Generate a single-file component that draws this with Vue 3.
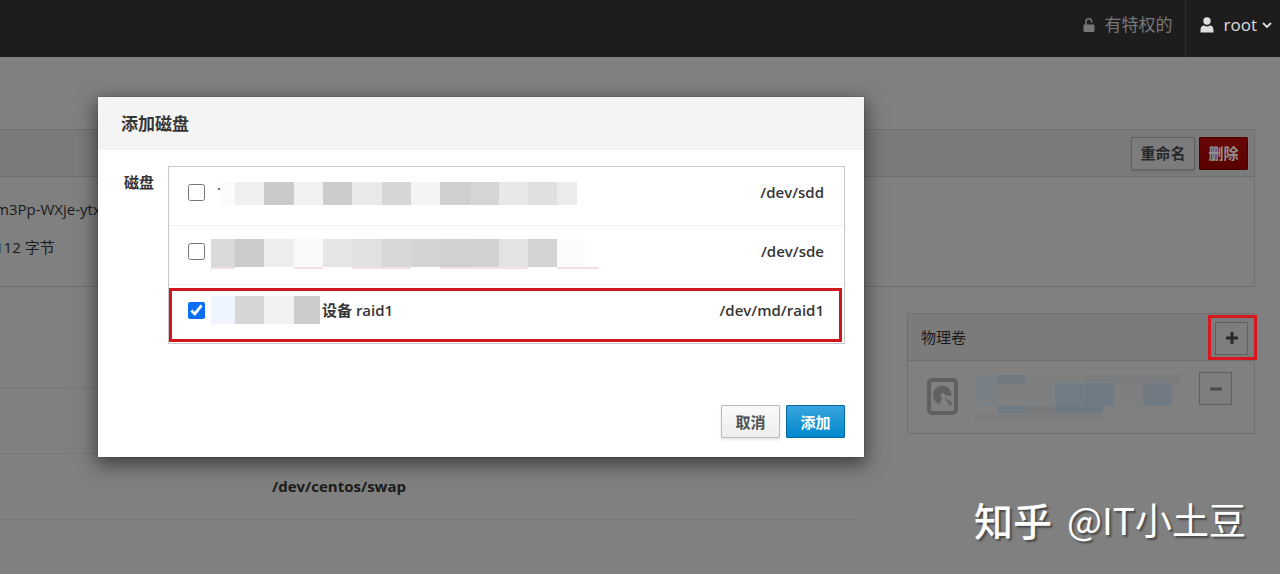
<script setup>
import { ref } from 'vue'

const disks = ref([
  {
    id: 'sdd', path: '/dev/sdd', name: '', checked: false, width: 366, top: 8, height: 23,
    cells: [[9, 15, '#fbfbfb'], [24, 29, '#efefef'], [53, 30, '#cacaca'], [83, 29, '#f1f1f1'], [112, 29, '#cccccc'], [141, 30, '#eaeaea'], [171, 29, '#d6d6d6'], [200, 29, '#f4f4f4'], [229, 30, '#cfcfcf'], [259, 29, '#d5d5d5'], [288, 29, '#e8e8e8'], [317, 29, '#e0e0e0'], [346, 20, '#ebebeb']],
    strips: [], dot: true
  },
  {
    id: 'sde', path: '/dev/sde', name: '', checked: false, width: 388, top: 6, height: 28,
    cells: [[0, 24, '#d9d9d9'], [24, 29, '#cbcbcb'], [53, 30, '#eeeeee'], [83, 29, '#f9f9f9'], [112, 29, '#e6e6e6'], [141, 30, '#e1e1e1'], [171, 29, '#d8d8d8'], [200, 29, '#d4d4d4'], [229, 30, '#d1d1d1'], [259, 29, '#d2d2d2'], [288, 29, '#e3e3e3'], [317, 29, '#d3d3d3'], [346, 28, '#fbfbfb']],
    strips: [[0, 24], [83, 29], [141, 59], [229, 88], [346, 42]], dot: false
  },
  {
    id: 'raid1', path: '/dev/md/raid1', name: '设备 raid1', checked: true, width: 109, top: 4, height: 28,
    cells: [[0, 24, '#eff4ff'], [24, 29, '#d6d6d6'], [53, 30, '#f2f2f2'], [83, 26, '#cccccc']],
    strips: [], dot: false
  }
])

const volumeCells = [
  [0, 0, 22, 31, '#798086'], [22, 0, 28, 9, '#727b82'], [22, 9, 58, 22, '#7d7f80'],
  [50, 0, 60, 9, '#7e7f7f'], [110, 0, 96, 9, '#7b7c7d'], [80, 8, 30, 23, '#717d86'], [110, 8, 29, 23, '#6e7b85'],
  [139, 9, 29, 22, '#7e7f80'], [168, 8, 29, 23, '#727b83'], [22, 31, 28, 7, '#6e7a84'],
  [50, 31, 30, 7, '#777b7e'], [80, 31, 48, 7, '#6d7983'], [0, 38, 128, 7, '#7d7d7d']
]
</script>

<template>
  <div class="screen">
    <header class="topbar">
      <span class="privilege">
        <svg width="12" height="16" viewBox="0 0 12 16" aria-hidden="true">
          <path d="M3 8V4.500a2.800 2.800 0 0 1 5.600 0V5.500" fill="none" stroke="currentColor" stroke-width="1.600" />
          <rect x="0.500" y="7.500" width="11" height="7.500" rx="1" fill="currentColor" />
        </svg>
        有特权的
      </span>
      <button class="user" type="button">
        <svg width="14" height="16" viewBox="0 0 14 16" aria-hidden="true">
          <circle cx="7" cy="4" r="3.700" fill="currentColor" />
          <path d="M.5 15.500v-2.500C.5 9.800 2.300 8.500 4 8.500c1.700 1.200 4.300 1.200 6 0 1.700 0 3.500 1.300 3.500 4.500v2.500z" fill="currentColor" />
        </svg>
        <span class="user-name">root</span>
        <svg width="10" height="8" viewBox="0 0 10 8" aria-hidden="true">
          <path d="M1 2l4 4 4-4" fill="none" stroke="currentColor" stroke-width="1.800" />
        </svg>
      </button>
    </header>

    <main class="content">
      <section class="panel">
        <div class="panel-head">
          <div class="actions">
            <button class="btn dim" type="button">重命名</button>
            <button class="btn danger" type="button">删除</button>
          </div>
        </div>
        <div class="facts">
          <div>m3Pp-WXje-ytx</div>
          <div>112 字节</div>
        </div>
      </section>

      <div class="columns">
        <section class="volumes">
          <div class="volume first"></div>
          <div class="volume"></div>
          <div class="volume">/dev/centos/swap</div>
        </section>

        <section class="panel physical">
          <div class="panel-head">
            <h2>物理卷</h2>
            <span class="marked">
              <button class="square" type="button" aria-label="添加">
                <svg width="12" height="12" viewBox="0 0 12 12"><path d="M6 0v12M0 6h12" stroke="currentColor" stroke-width="3" /></svg>
              </button>
            </span>
          </div>
          <div class="physical-row">
            <svg class="drive" width="31" height="37" viewBox="0 0 31 37" aria-hidden="true">
              <rect x="2" y="2" width="27" height="33" rx="3" fill="none" stroke="currentColor" stroke-width="4" />
              <path d="M13 26A9.300 9.300 0 1 1 24.500 18L18 17A2.300 2.300 0 1 0 15 19.500z" fill="currentColor" />
              <path d="M17 18.500l8 6.500-1.500 3.500z" fill="currentColor" />
            </svg>
            <svg class="redacted" width="206" height="46" viewBox="0 0 206 46" aria-hidden="true">
              <rect v-for="(c, i) in volumeCells" :key="i" :x="c[0]" :y="c[1]" :width="c[2]" :height="c[3]" :fill="c[4]" />
            </svg>
            <button class="square minus" type="button" aria-label="移除">
              <svg width="12" height="12" viewBox="0 0 12 12"><path d="M0 6h12" stroke="currentColor" stroke-width="3" /></svg>
            </button>
          </div>
        </section>
      </div>
    </main>

    <div class="modal-layer">
      <form class="dialog" role="dialog" aria-labelledby="dialog-title" @submit.prevent>
        <h1 id="dialog-title">添加磁盘</h1>
        <div class="dialog-body">
          <span id="disk-label" class="field-label">磁盘</span>
          <ul class="disks" aria-labelledby="disk-label">
            <li v-for="d in disks" :key="d.id" :class="{ chosen: d.id === 'raid1' }">
              <label>
                <input v-model="d.checked" type="checkbox" />
                <svg class="mask" :width="d.width" height="36" aria-hidden="true">
                  <circle v-if="d.dot" cx="8" cy="15" r="1" fill="#444" />
                  <rect v-for="(c, i) in d.cells" :key="i" :x="c[0]" :y="d.top" :width="c[1]" :height="d.height" :fill="c[2]" />
                  <rect v-for="(s, i) in d.strips" :key="'s' + i" :x="s[0]" y="34" :width="s[1]" height="2" fill="#f4e0e2" />
                </svg>
                <span class="disk-name">{{ d.name }}</span>
                <span>{{ d.path }}</span>
              </label>
            </li>
          </ul>
        </div>
        <footer>
          <button class="btn light" type="button">取消</button>
          <button class="btn primary" type="submit">添加</button>
        </footer>
      </form>
    </div>

    <div class="watermark"><span class="brand">知乎</span><span>@IT小土豆</span></div>
  </div>
</template>

<style>
body {
  margin: 0;
  background: #808080;
}
</style>

<style scoped>
.screen {
  position: relative;
  min-height: 100vh;
  box-sizing: border-box;
  overflow: hidden;
  background: #808080;
  color: #1b1b1b;
  font: 15px/22px "Open Sans", "Noto Sans CJK SC", sans-serif;
}
button {
  font: inherit;
  margin: 0;
}
svg {
  display: block;
  flex: none;
}
.topbar {
  height: 57px;
  display: flex;
  justify-content: flex-end;
  background: #1d1d1d;
}
.privilege {
  display: flex;
  align-items: center;
  gap: 10px;
  padding: 0 12px 8px 0;
  color: #777;
  font-size: 17px;
}
.user {
  display: flex;
  align-items: center;
  padding: 0 8px 8px 14px;
  border: 0;
  border-left: 1px solid #303030;
  background: none;
  color: #dedede;
}
.user-name {
  font-size: 17px;
  margin: 0 5px 0 10px;
}
.content {
  padding: 72px 25px 0 0;
  margin-left: -5px;
}
.panel {
  border: 1px solid #6f6f6f;
  border-left: 0;
}
.panel-head {
  display: flex;
  align-items: center;
  justify-content: space-between;
  height: 46px;
  border-bottom: 1px solid #6f6f6f;
  background: #7b7b7b;
}
.actions {
  display: flex;
  gap: 4px;
  margin-left: auto;
  padding-right: 6px;
}
.btn {
  height: 33px;
  box-sizing: border-box;
  padding: 0 8px;
  border: 1px solid #606060;
  border-radius: 1px;
  font-weight: 600;
  line-height: 20px;
}
.btn.dim {
  width: 64px;
  background: #7c7c7c;
  color: #262829;
  box-shadow: 0 2px 3px rgba(0, 0, 0, 0.1);
}
.btn.danger {
  width: 49px;
  border-color: #480000;
  background: linear-gradient(#690606, #590000);
  color: #929292;
}
.facts {
  display: flex;
  flex-direction: column;
  gap: 16px;
  padding: 21px 0 28px;
}
.columns {
  display: flex;
  gap: 50px;
  align-items: flex-start;
  padding-top: 26px;
}
.volumes {
  flex: 1;
}
.volume {
  height: 65px;
  border-bottom: 1px solid #787878;
  padding-left: 277px;
  line-height: 65px;
  font-weight: 700;
}
.volume.first {
  height: 74px;
}
.physical {
  width: 346px;
  border-left: 1px solid #6f6f6f;
}
h2 {
  margin: 0 0 0 13px;
  font-size: 15px;
  font-weight: 400;
}
.marked {
  padding: 4px 6px 2px 4px;
  border: 3px solid #d7191f;
  margin-right: -3px;
}
.square {
  width: 33px;
  height: 33px;
  display: grid;
  place-items: center;
  box-sizing: border-box;
  border: 1px solid #5f5f5f;
  background: #7e7e7e;
  color: #282828;
  padding: 0;
}
.physical-row {
  display: flex;
  align-items: flex-start;
  padding: 11px 22px 0 19px;
  height: 61px;
}
.drive {
  margin-top: 6px;
  color: #606060;
}
.redacted {
  margin: 3px auto 0 17px;
}
.square.minus {
  color: #4b4b4b;
}
.modal-layer {
  position: absolute;
  inset: 97px 98px auto;
}
.dialog {
  max-width: 766px;
  background: #fff;
  color: #363636;
  box-shadow: 0 0 1px 0 rgba(0, 0, 0, 0.4), 0 6px 18px 2px rgba(0, 0, 0, 0.5);
}
h1 {
  margin: 0;
  padding: 15px 23px 14px;
  background: #f4f4f4;
  font-size: 17px;
  line-height: 24px;
  font-weight: 600;
}
.dialog-body {
  display: flex;
  padding: 16px 19px 0 26px;
}
.field-label {
  width: 44px;
  padding-top: 5px;
  font-weight: 600;
}
.disks {
  flex: 1;
  margin: 0;
  padding: 0;
  list-style: none;
  border: 1px solid #c8c8c8;
}
.disks li {
  position: relative;
  height: 58px;
  border-top: 1px solid #f0f0f0;
}
.disks li:first-child {
  border-top: 0;
}
.disks label {
  display: flex;
  align-items: center;
  padding: 7px 20px 0 19px;
  font-weight: 600;
}
.chosen::after {
  content: "";
  position: absolute;
  inset: 3px 2px 1px 0;
  border: 3px solid #cf171d;
  pointer-events: none;
}
input[type="checkbox"] {
  width: 17px;
  height: 17px;
  margin: 0 6px 0 0;
  accent-color: #0a6ff5;
}
.disk-name {
  margin: 0 auto 0 2px;
}
footer {
  display: flex;
  justify-content: flex-end;
  gap: 6px;
  padding: 61px 19px 19px;
}
footer .btn {
  width: 59px;
  font-weight: 700;
}
.btn.light {
  border-color: #bababa;
  background: linear-gradient(#fafafa, #ededed);
  color: #4d5258;
  box-shadow: 0 2px 3px rgba(0, 0, 0, 0.1);
}
.btn.primary {
  border-color: #0568a0;
  background: linear-gradient(#39a5dc, #0088ce);
  color: #fff;
}
.watermark {
  position: absolute;
  right: 34px;
  bottom: 31px;
  display: flex;
  align-items: center;
  gap: 15px;
  color: #fff;
  font: 37px/48px "Noto Sans CJK SC", sans-serif;
  text-shadow: 2px 2px 2px rgba(0, 0, 0, 0.45);
}
.brand {
  font-size: 39px;
  font-weight: 500;
}
</style>
